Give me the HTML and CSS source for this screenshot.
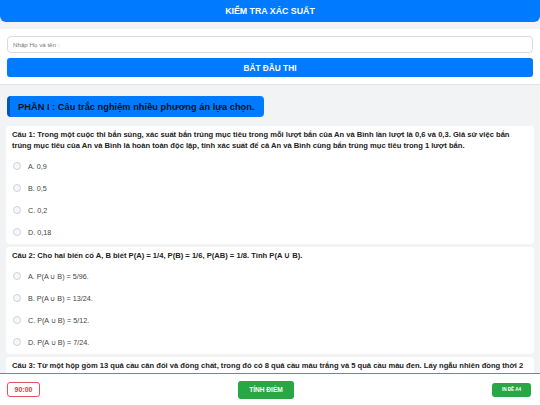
FILE: index.html
```html
<!DOCTYPE html>
<html lang="vi">
<head>
<meta charset="utf-8">
<title>Kiểm tra xác suất</title>
<link rel="stylesheet" href="styles.css">
</head>
<body>
<header class="topbar">KIỂM TRA XÁC SUẤT</header>
<section class="start-panel">
  <input class="name-input" type="text" placeholder="Nhập Họ và tên :">
  <button class="btn-start">BẮT ĐẦU THI</button>
</section>
<main class="quiz">
  <div class="part-title">PHẦN I : Câu trắc nghiệm nhiều phương án lựa chọn.</div>
  <div class="card">
    <p class="q">Câu 1: Trong một cuộc thi bắn súng, xác suất bắn trúng mục tiêu trong mỗi lượt bắn của An và Bình lần lượt là 0,6 và 0,3. Giả sử việc bắn trúng mục tiêu của An và Bình là hoàn toàn độc lập, tính xác suất để cả An và Bình cùng bắn trúng mục tiêu trong 1 lượt bắn.</p>
    <ul class="opts">
      <li><span class="radio"></span>A. 0,9</li>
      <li><span class="radio"></span>B. 0,5</li>
      <li><span class="radio"></span>C. 0,2</li>
      <li><span class="radio"></span>D. 0,18</li>
    </ul>
  </div>
  <div class="card">
    <p class="q">Câu 2: Cho hai biến cố A, B biết P(A) = 1/4, P(B) = 1/6, P(AB) = 1/8. Tính P(A ∪ B).</p>
    <ul class="opts">
      <li><span class="radio"></span>A. P(A ∪ B) = 5/96.</li>
      <li><span class="radio"></span>B. P(A ∪ B) = 13/24.</li>
      <li><span class="radio"></span>C. P(A ∪ B) = 5/12.</li>
      <li><span class="radio"></span>D. P(A ∪ B) = 7/24.</li>
    </ul>
  </div>
  <div class="card">
    <p class="q">Câu 3: Từ một hộp gồm 13 quả cầu cân đối và đồng chất, trong đó có 8 quả cầu màu trắng và 5 quả cầu màu đen. Lấy ngẫu nhiên đồng thời 2 quả cầu từ hộp. Tính xác suất để lấy được 2 quả cầu cùng màu.</p>
  </div>
</main>
<footer class="bottombar">
  <div class="timer">90:00</div>
  <button class="btn-green btn-score">TÍNH ĐIỂM</button>
  <button class="btn-green btn-print">IN ĐỀ A4</button>
</footer>
</body>
</html>
```

FILE: styles.css
```css
* { box-sizing: border-box; }
html, body { margin: 0; padding: 0; }
body {
  width: 540px;
  height: 405px;
  overflow: hidden;
  background: #f1f3f4;
  font-family: "Liberation Sans", Arial, sans-serif;
  color: #222;
}
.topbar {
  height: 22px;
  background: #007bff;
  color: #fff;
  font-weight: bold;
  font-size: 8.8px;
  display: flex;
  align-items: center;
  justify-content: center;
  border-radius: 0 0 6px 6px;
}
.start-panel {
  margin-top: 7px;
  background: #fff;
  border-bottom: 1px solid #e2e4e6;
  padding: 7px 7px 7px 7px;
  display: flex;
  flex-direction: column;
  gap: 5px;
}
.name-input {
  height: 17px;
  border: 1px solid #d9dcdf;
  border-radius: 4px;
  padding: 0 5px;
  font-family: inherit;
  font-size: 6.2px;
  background: #fff;
  outline: none;
}
.name-input::placeholder { color: #777; }
.btn-start {
  height: 19px;
  border: none;
  border-radius: 3px;
  background: #007bff;
  color: #fff;
  font-family: inherit;
  font-weight: bold;
  font-size: 8.3px;
  padding: 0;
}
.quiz {
  padding: 11px 6px 0 6px;
}
.part-title {
  width: 257px;
  height: 21px;
  margin-left: 1px;
  background: #007bff;
  border-left: 3px solid #0056b3;
  border-radius: 4px;
  color: #111;
  font-weight: bold;
  font-size: 9.3px;
  display: flex;
  align-items: center;
  padding-left: 8px;
  margin-bottom: 9px;
}
.card {
  background: #fff;
  border-radius: 4px;
  padding: 3px 6px 1px 6px;
  margin-bottom: 3px;
}
.q {
  margin: 0;
  font-weight: bold;
  font-size: 7.6px;
  line-height: 11px;
  color: #222;
}
.opts {
  list-style: none;
  margin: 4px 0 0 0;
  padding: 0;
}
.opts li {
  height: 22px;
  display: flex;
  align-items: center;
  font-size: 7.2px;
  color: #444;
  padding-left: 1px;
}
.radio {
  width: 8px;
  height: 8px;
  border-radius: 50%;
  border: 1px solid #cfd3d6;
  background: #f6f7f8;
  margin-right: 7px;
}
.bottombar {
  position: fixed;
  left: 0;
  right: 0;
  bottom: 0;
  height: 32px;
  background: #fff;
  border-top: 1px solid #4a90d9;
  display: flex;
  align-items: center;
  justify-content: space-between;
  padding: 0 9px 0 7px;
}
.timer {
  width: 33px;
  height: 15px;
  border: 1px solid #e0525f;
  border-radius: 3px;
  color: #dc3545;
  font-weight: bold;
  font-size: 7px;
  display: flex;
  align-items: center;
  justify-content: center;
}
.btn-green {
  border: none;
  background: #28a745;
  color: #fff;
  font-family: inherit;
  font-weight: bold;
  padding: 0;
  border-radius: 3px;
}
.btn-score {
  width: 56px;
  height: 18px;
  font-size: 6.6px;
}
.btn-print {
  width: 39px;
  height: 14px;
  font-size: 4.6px;
}
```
